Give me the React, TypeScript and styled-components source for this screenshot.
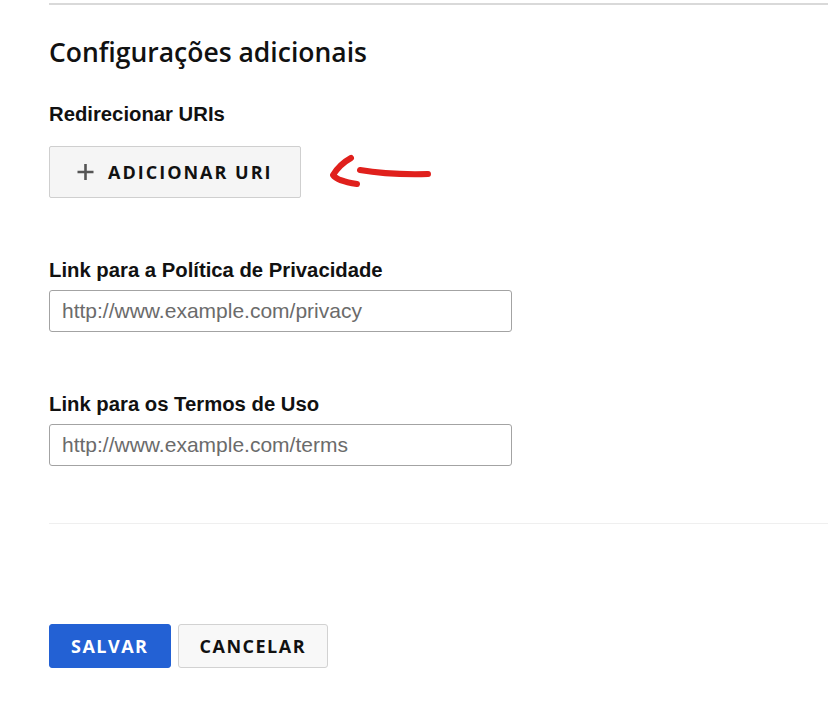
import React from "react";
import styled, { createGlobalStyle } from "styled-components";

const GlobalStyle = createGlobalStyle`
  html, body {
    margin: 0;
    padding: 0;
    background: #ffffff;
  }
  body {
    font-family: "Liberation Sans", Arial, sans-serif;
    color: #1a1a1a;
  }
`;

const Page = styled.div`
  width: 828px;
  height: 710px;
  padding-left: 49px;
  box-sizing: border-box;
  overflow: hidden;
`;

const TopRule = styled.div`
  margin-top: 3px;
  height: 2px;
  background: #d9d9d9;
`;

const Heading = styled.h2`
  margin: 31px 0 0;
  font-family: "Open Sans", sans-serif;
  font-weight: 600;
  font-size: 26.5px;
  line-height: 32px;
  color: #111;
`;

const FieldLabel = styled.label<{ $top: number }>`
  display: block;
  margin-top: ${(p) => p.$top}px;
  font-family: "Liberation Sans", Arial, sans-serif;
  font-weight: 700;
  font-size: 20.3px;
  line-height: 24px;
  color: #111;
`;

const ActionRow = styled.div`
  display: flex;
  align-items: center;
  gap: 27px;
  margin-top: 20px;
`;

const GhostButton = styled.button`
  display: flex;
  align-items: center;
  gap: 13px;
  width: 252px;
  height: 52px;
  padding: 0 0 0 26px;
  box-sizing: border-box;
  background: #f5f5f5;
  border: 1px solid #cfcfcf;
  border-radius: 2px;
  font-family: "Open Sans", sans-serif;
  font-weight: 700;
  font-size: 18px;
  letter-spacing: 2px;
  color: #111;
  cursor: pointer;
`;

const TextInput = styled.input`
  display: block;
  width: 463px;
  height: 42px;
  margin-top: 8px;
  padding: 0 12px;
  box-sizing: border-box;
  border: 1px solid #a3a3a3;
  border-radius: 3px;
  font-family: "Liberation Sans", Arial, sans-serif;
  font-size: 21px;
  color: #222;
  outline: none;

  &::placeholder {
    color: #6b6b6b;
  }
`;

const Divider = styled.div`
  margin-top: 57px;
  height: 1px;
  background: #efefef;
`;

const Footer = styled.div`
  display: flex;
  gap: 7px;
  margin-top: 100px;
`;

const FooterButton = styled.button<{ $primary?: boolean }>`
  height: 44px;
  padding: 0 21px;
  box-sizing: border-box;
  border-radius: 3px;
  border: 1px solid ${(p) => (p.$primary ? "#2361d4" : "#d2d2d2")};
  background: ${(p) => (p.$primary ? "#2361d4" : "#f8f8f8")};
  color: ${(p) => (p.$primary ? "#ffffff" : "#111")};
  font-family: "Open Sans", sans-serif;
  font-weight: 700;
  font-size: 18px;
  letter-spacing: 1.5px;
  cursor: pointer;
`;

const PlusIcon = () => (
  <svg width="19" height="18" viewBox="0 0 19 18" aria-hidden="true">
    <path d="M9.5 1v16M1.5 9h16" stroke="#555" strokeWidth="2.6" fill="none" />
  </svg>
);

const RedArrow = () => (
  <svg width="104" height="36" viewBox="0 0 104 36" aria-hidden="true">
    <path
      d="M23 4 Q12 10 5 21 Q9 27 29 30"
      stroke="#e0201c"
      strokeWidth="6"
      strokeLinecap="round"
      strokeLinejoin="round"
      fill="none"
    />
    <path
      d="M32 16 Q60 21 100 20"
      stroke="#e0201c"
      strokeWidth="6"
      strokeLinecap="round"
      fill="none"
    />
  </svg>
);

export default function App() {
  return (
    <>
      <GlobalStyle />
      <Page>
        <TopRule />
        <Heading>Configurações adicionais</Heading>

        <FieldLabel $top={34}>Redirecionar URIs</FieldLabel>
        <ActionRow>
          <GhostButton type="button">
            <PlusIcon />
            ADICIONAR URI
          </GhostButton>
          <RedArrow />
        </ActionRow>

        <FieldLabel $top={60} htmlFor="privacy">
          Link para a Política de Privacidade
        </FieldLabel>
        <TextInput id="privacy" placeholder="http://www.example.com/privacy" />

        <FieldLabel $top={60} htmlFor="terms">
          Link para os Termos de Uso
        </FieldLabel>
        <TextInput id="terms" placeholder="http://www.example.com/terms" />

        <Divider />

        <Footer>
          <FooterButton $primary type="button">
            SALVAR
          </FooterButton>
          <FooterButton type="button">CANCELAR</FooterButton>
        </Footer>
      </Page>
    </>
  );
}
